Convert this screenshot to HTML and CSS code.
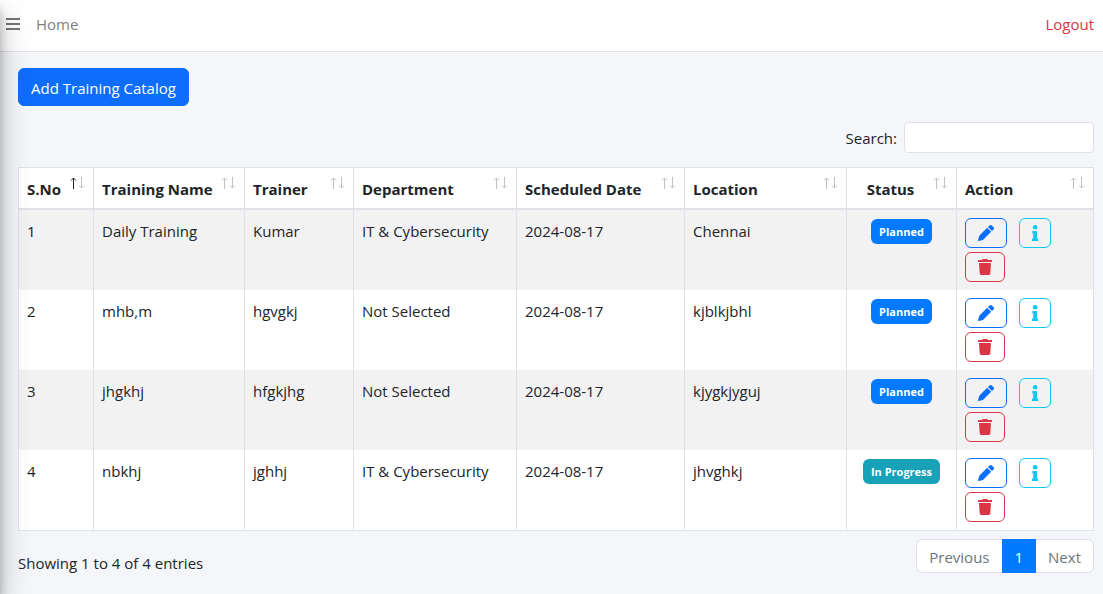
FILE: index.html
```html
<!DOCTYPE html>
<html lang="en">
<head>
<meta charset="utf-8">
<meta name="viewport" content="width=device-width, initial-scale=1">
<title>Training Catalog</title>
<link rel="stylesheet" href="styles.css">
</head>
<body>
<svg class="sprite" aria-hidden="true">
  <symbol id="pencil" viewBox="0 0 16 16"><path d="M12.700 0a1.500 1.500 0 0 0-1.100.400L10 2l4 4 1.600-1.600a1.500 1.500 0 0 0 0-2.100L13.700.400a1.500 1.500 0 0 0-1-.4zM9.200 2.800 1.700 10.300c-.3.300-.5.600-.6 1L0 15.200c-.1.500.3.900.8.800l3.900-1.100c.4-.1.700-.3 1-.6L13.200 6.800z"/></symbol>
  <symbol id="info" viewBox="0 0 6 16"><circle cx="3.200" cy="2.300" r="2.300"/><path d="M.3 6h4.700v7.500H6V16H0v-2.500h1.200V8.500H.3z"/></symbol>
  <symbol id="trash" viewBox="0 0 14 16"><path d="M4.800 0h4.400l.7 1H14v2H0V1h4.100zM1 4h12l-.7 10.600A1.500 1.500 0 0 1 10.800 16H3.200a1.500 1.500 0 0 1-1.500-1.400z"/></symbol>
  <symbol id="up" viewBox="0 0 7 12"><path d="M3.500 12V1M1 3.500 3.500 1 6 3.500"/></symbol>
  <symbol id="down" viewBox="0 0 7 12"><path d="M3.500 0v11M1 8.500 3.500 11 6 8.500"/></symbol>
</svg>

<aside class="sidebar" aria-hidden="true"></aside>

<header class="navbar">
  <nav class="nav-left">
    <button class="menu-toggle" type="button" aria-label="Toggle menu"><svg viewBox="0 0 14 12"><path d="M0 1h14M0 6h14M0 11h14"/></svg></button>
    <a class="nav-link" href="#">Home</a>
  </nav>
  <a class="logout" href="#">Logout</a>
</header>

<main class="content">
  <button class="btn-primary" type="button">Add Training Catalog</button>

  <div class="filter">
    <label for="search">Search:</label>
    <input id="search" class="search" type="search">
  </div>

  <table class="catalog">
    <colgroup>
      <col class="c-no"><col class="c-name"><col class="c-trainer"><col class="c-dept"><col class="c-date"><col class="c-loc"><col class="c-status"><col class="c-action">
    </colgroup>
    <thead>
      <tr>
        <th>S.No<span class="sort"><svg class="asc"><use href="#up"/></svg><svg><use href="#down"/></svg></span></th>
        <th>Training Name<span class="sort"><svg><use href="#up"/></svg><svg><use href="#down"/></svg></span></th>
        <th>Trainer<span class="sort"><svg><use href="#up"/></svg><svg><use href="#down"/></svg></span></th>
        <th>Department<span class="sort"><svg><use href="#up"/></svg><svg><use href="#down"/></svg></span></th>
        <th>Scheduled Date<span class="sort"><svg><use href="#up"/></svg><svg><use href="#down"/></svg></span></th>
        <th>Location<span class="sort"><svg><use href="#up"/></svg><svg><use href="#down"/></svg></span></th>
        <th class="status">Status<span class="sort"><svg><use href="#up"/></svg><svg><use href="#down"/></svg></span></th>
        <th>Action<span class="sort"><svg><use href="#up"/></svg><svg><use href="#down"/></svg></span></th>
      </tr>
    </thead>
    <tbody>
      <tr>
        <td>1</td><td>Daily Training</td><td>Kumar</td><td>IT &amp; Cybersecurity</td><td>2024-08-17</td><td>Chennai</td>
        <td class="status"><span class="badge planned">Planned</span></td>
        <td class="action-cell"><div class="actions"><button class="act edit" type="button" aria-label="Edit"><svg><use href="#pencil"/></svg></button><button class="act info" type="button" aria-label="Details"><svg><use href="#info"/></svg></button><button class="act delete" type="button" aria-label="Delete"><svg><use href="#trash"/></svg></button></div></td>
      </tr>
      <tr>
        <td>2</td><td>mhb,m</td><td>hgvgkj</td><td>Not Selected</td><td>2024-08-17</td><td>kjblkjbhl</td>
        <td class="status"><span class="badge planned">Planned</span></td>
        <td class="action-cell"><div class="actions"><button class="act edit" type="button" aria-label="Edit"><svg><use href="#pencil"/></svg></button><button class="act info" type="button" aria-label="Details"><svg><use href="#info"/></svg></button><button class="act delete" type="button" aria-label="Delete"><svg><use href="#trash"/></svg></button></div></td>
      </tr>
      <tr>
        <td>3</td><td>jhgkhj</td><td>hfgkjhg</td><td>Not Selected</td><td>2024-08-17</td><td>kjygkjyguj</td>
        <td class="status"><span class="badge planned">Planned</span></td>
        <td class="action-cell"><div class="actions"><button class="act edit" type="button" aria-label="Edit"><svg><use href="#pencil"/></svg></button><button class="act info" type="button" aria-label="Details"><svg><use href="#info"/></svg></button><button class="act delete" type="button" aria-label="Delete"><svg><use href="#trash"/></svg></button></div></td>
      </tr>
      <tr>
        <td>4</td><td>nbkhj</td><td>jghhj</td><td>IT &amp; Cybersecurity</td><td>2024-08-17</td><td>jhvghkj</td>
        <td class="status"><span class="badge progress">In Progress</span></td>
        <td class="action-cell"><div class="actions"><button class="act edit" type="button" aria-label="Edit"><svg><use href="#pencil"/></svg></button><button class="act info" type="button" aria-label="Details"><svg><use href="#info"/></svg></button><button class="act delete" type="button" aria-label="Delete"><svg><use href="#trash"/></svg></button></div></td>
      </tr>
    </tbody>
  </table>

  <footer class="table-footer">
    <p class="summary">Showing 1 to 4 of 4 entries</p>
    <nav class="pagination" aria-label="Pages">
      <a class="page" href="#">Previous</a><a class="page current" href="#" aria-current="page">1</a><a class="page" href="#">Next</a>
    </nav>
  </footer>
</main>
</body>
</html>
```

FILE: styles.css
```css
* {
  box-sizing: border-box;
}

body {
  margin: 0;
  min-height: 100vh;
  background: #f4f6f9;
  color: #212529;
  font-family: "Segoe UI", "Open Sans", "Noto Sans", sans-serif;
  font-size: 15px;
  line-height: 24px;
}

button,
input {
  font: inherit;
}

a {
  text-decoration: none;
}

.sprite {
  position: absolute;
  width: 0;
  height: 0;
}

/* Collapsed off-canvas sidebar; only its shadow reaches the page. */
.sidebar {
  position: fixed;
  top: 0;
  bottom: 0;
  left: -250px;
  width: 250px;
  z-index: 10;
  pointer-events: none;
  box-shadow: 0 14px 28px rgba(0, 0, 0, 0.25), 0 10px 10px rgba(0, 0, 0, 0.22);
}

.navbar {
  display: flex;
  align-items: center;
  justify-content: space-between;
  padding: 12px 9px 15px 6px;
  background: #fff;
  border-bottom: 1px solid #dee2e6;
}

.nav-left {
  display: flex;
  align-items: center;
  gap: 16px;
}

.menu-toggle {
  display: flex;
  padding: 0;
  border: 0;
  background: none;
}

.menu-toggle svg {
  width: 14px;
  height: 12px;
  stroke: #757575;
  stroke-width: 2;
}

.nav-link {
  color: #808080;
}

.logout {
  color: #dc3545;
}

.content {
  display: flex;
  flex-direction: column;
  align-items: flex-start;
  padding: 16px 9px 16px 18px;
}

.btn-primary {
  padding: 7px 12px 5px;
  border: 1px solid #0d6efd;
  border-radius: 6px;
  background: #0d6efd;
  color: #fff;
}

.filter {
  display: flex;
  align-items: center;
  align-self: flex-end;
  gap: 7px;
  margin: 16px 0 14px;
}

.search {
  width: 190px;
  height: 31px;
  padding: 4px 8px;
  border: 1px solid #dee2e6;
  border-radius: 4px;
  background: #fff;
}

.catalog {
  width: 100%;
  table-layout: fixed;
  border: 1px solid #dee2e6;
  border-left: 0;
  border-spacing: 0;
  background: #fff;
}

.c-no { width: 75px; }
.c-name { width: 151px; }
.c-trainer { width: 109px; }
.c-dept { width: 163px; }
.c-date { width: 168px; }
.c-loc { width: 162px; }
.c-status { width: 110px; }
.c-action { width: 137px; }

.catalog th,
.catalog td {
  padding: 9px 8px 7px;
  border-left: 1px solid #dee2e6;
  text-align: left;
  vertical-align: top;
}

.catalog th {
  position: relative;
  border-bottom: 2px solid #dee2e6;
  font-weight: 700;
  white-space: nowrap;
}

.catalog .action-cell {
  padding: 8px;
}

.catalog tbody tr:nth-child(odd) {
  background: #f2f2f2;
}

.catalog .status {
  text-align: center;
}

.catalog th.status {
  padding-right: 30px;
}

.sort {
  position: absolute;
  top: 9px;
  right: 8px;
  display: flex;
  gap: 1px;
}

.sort svg {
  width: 7px;
  height: 12px;
  fill: none;
  stroke: #c0c1c2;
}

.sort .asc {
  stroke: #212529;
}

.badge {
  display: inline-block;
  padding: 5px 8px;
  border-radius: 6px;
  color: #fff;
  font-size: 11px;
  font-weight: 700;
  line-height: 15px;
  vertical-align: top;
}

.planned {
  background: #007bff;
}

.progress {
  background: #17a2b8;
}

.actions {
  display: flex;
  flex-wrap: wrap;
  gap: 4px 12px;
}

.act {
  display: flex;
  align-items: center;
  justify-content: center;
  height: 30px;
  padding: 0;
  border: 1px solid currentColor;
  border-radius: 6px;
  background: none;
}

.act svg {
  height: 16px;
  fill: currentColor;
}

.edit {
  width: 42px;
  color: #0d6efd;
}

.edit svg {
  width: 16px;
}

.info {
  width: 32px;
  color: #0dcaf0;
}

.info svg {
  width: 6px;
}

.delete {
  width: 40px;
  margin-right: 24px;
  color: #dc3545;
}

.delete svg {
  width: 14px;
}

.catalog th:first-child {
  white-space: nowrap;
}

.table-footer {
  display: flex;
  justify-content: space-between;
  align-self: stretch;
  padding-top: 8px;
}

.summary {
  margin: 12px 0 0;
}

.pagination {
  display: flex;
  align-self: flex-start;
}

.page {
  padding: 5px 12px 3px;
  border: 1px solid #dee2e6;
  background: #fff;
  color: #6c757d;
}

.page:first-child {
  border-right: 0;
  border-radius: 6px 0 0 6px;
}

.page:last-child {
  border-left: 0;
  border-radius: 0 6px 6px 0;
}

.current {
  border-color: #007bff;
  background: #007bff;
  color: #fff;
}
```
